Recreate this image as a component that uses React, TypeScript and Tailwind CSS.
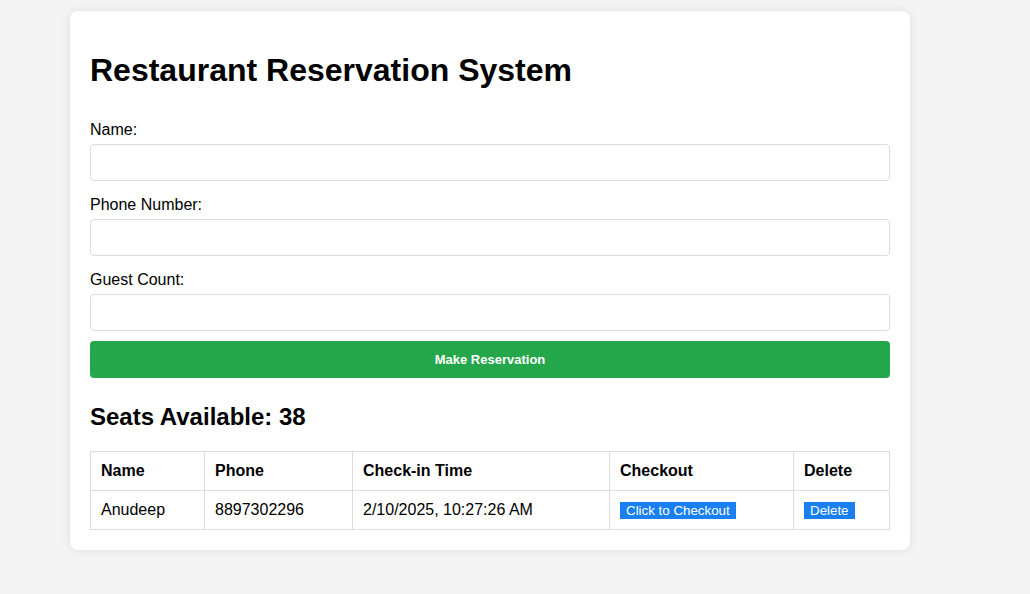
import { useState } from "react"

type Reservation = {
  id: number
  name: string
  phone: string
  checkIn: string
}

export default function App() {
  const [name, setName] = useState("")
  const [phone, setPhone] = useState("")
  const [guests, setGuests] = useState("")
  const [seats, setSeats] = useState(38)
  const [reservations, setReservations] = useState<Reservation[]>([
    { id: 1, name: "Anudeep", phone: "8897302296", checkIn: "2/10/2025, 10:27:26 AM" },
  ])

  const handleReserve = () => {
    const count = parseInt(guests, 10)
    if (!name || !phone || !count || count > seats) return
    setReservations([
      ...reservations,
      { id: Date.now(), name, phone, checkIn: new Date().toLocaleString() },
    ])
    setSeats(seats - count)
    setName("")
    setPhone("")
    setGuests("")
  }

  const handleDelete = (id: number) => {
    setReservations(reservations.filter((r) => r.id !== id))
  }

  return (
    <div className="min-h-[594px] bg-[#f4f4f4] pt-[11px] pl-[70px] font-['Liberation_Sans',Arial,sans-serif] text-black">
      <div className="w-[840px] rounded-lg bg-white p-5 shadow-[0_0_10px_rgba(0,0,0,0.1)]">
        <h1 className="mt-[21px] mb-[32px] text-[32px] font-bold leading-[37px]">Restaurant Reservation System</h1>

        <label className="block text-base leading-[18px]">Name:</label>
        <input
          type="text"
          value={name}
          onChange={(e) => setName(e.target.value)}
          className="mt-[5px] block h-[37px] w-full rounded border border-[#ddd] px-[10px] text-base outline-none"
        />

        <label className="mt-[15px] block text-base leading-[18px]">Phone Number:</label>
        <input
          type="text"
          value={phone}
          onChange={(e) => setPhone(e.target.value)}
          className="mt-[5px] block h-[37px] w-full rounded border border-[#ddd] px-[10px] text-base outline-none"
        />

        <label className="mt-[15px] block text-base leading-[18px]">Guest Count:</label>
        <input
          type="number"
          value={guests}
          onChange={(e) => setGuests(e.target.value)}
          className="mt-[5px] block h-[37px] w-full rounded border border-[#ddd] px-[10px] text-base outline-none"
        />

        <button
          onClick={handleReserve}
          className="mt-[10px] block h-[37px] w-full rounded bg-[#23a74a] text-[13px] font-bold text-white"
        >
          Make Reservation
        </button>

        <h2 className="mt-[25px] mb-[20px] text-2xl font-bold leading-[28px]">Seats Available: {seats}</h2>

        <table className="w-full border-collapse text-base">
          <thead>
            <tr>
              <th className="w-[114px] border border-[#ddd] px-[10px] py-[10px] text-left font-bold leading-[18px]">Name</th>
              <th className="w-[148px] border border-[#ddd] px-[10px] py-[10px] text-left font-bold leading-[18px]">Phone</th>
              <th className="w-[257px] border border-[#ddd] px-[10px] py-[10px] text-left font-bold leading-[18px]">Check-in Time</th>
              <th className="w-[184px] border border-[#ddd] px-[10px] py-[10px] text-left font-bold leading-[18px]">Checkout</th>
              <th className="border border-[#ddd] px-[10px] py-[10px] text-left font-bold leading-[18px]">Delete</th>
            </tr>
          </thead>
          <tbody>
            {reservations.map((r) => (
              <tr key={r.id}>
                <td className="border border-[#ddd] px-[10px] py-[10px] leading-[18px]">{r.name}</td>
                <td className="border border-[#ddd] px-[10px] py-[10px] leading-[18px]">{r.phone}</td>
                <td className="border border-[#ddd] px-[10px] py-[10px] leading-[18px]">{r.checkIn}</td>
                <td className="border border-[#ddd] px-[10px] py-[10px] leading-[18px]">
                  <button className="bg-[#1a80f0] px-[6px] text-[13.33px] leading-[17px] text-white">Click to Checkout</button>
                </td>
                <td className="border border-[#ddd] px-[10px] py-[10px] leading-[18px]">
                  <button
                    onClick={() => handleDelete(r.id)}
                    className="bg-[#1a80f0] px-[6px] text-[13.33px] leading-[17px] text-white"
                  >
                    Delete
                  </button>
                </td>
              </tr>
            ))}
          </tbody>
        </table>
      </div>
    </div>
  )
}
